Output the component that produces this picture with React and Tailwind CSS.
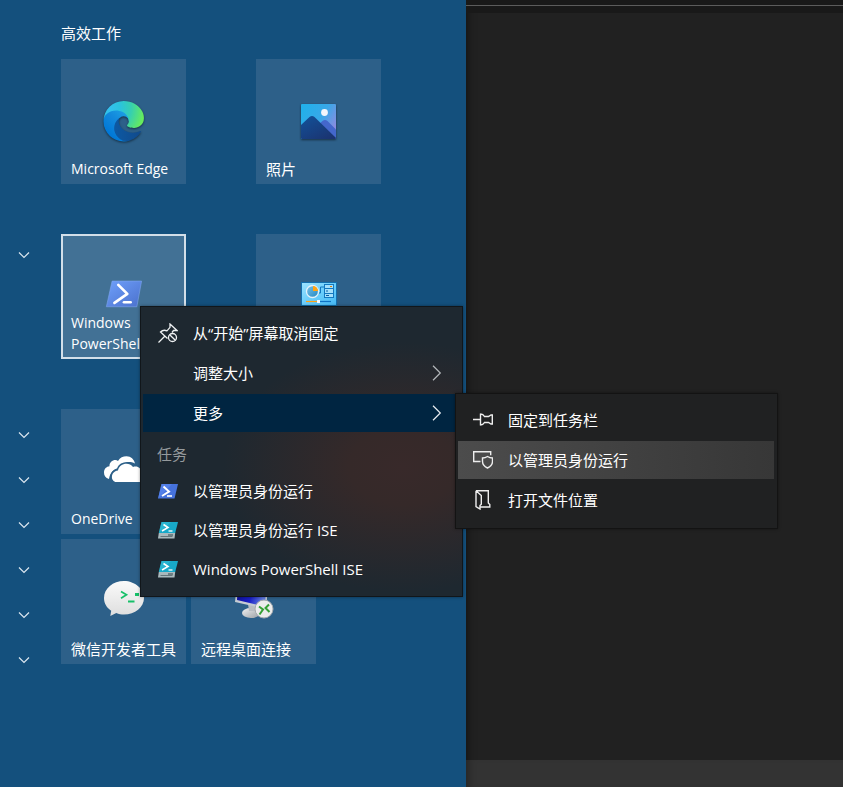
import React from "react";

function EdgeIcon() {
  return (
    <svg width="47" height="46" viewBox="0 0 47 46" aria-hidden="true" className="drop-shadow-[0_1px_1px_rgba(0,0,0,0.5)]">
      <defs>
        <linearGradient id="edgeDark" x1="63" y1="177" x2="241" y2="177" gradientUnits="userSpaceOnUse">
          <stop offset="0" stopColor="#0c59a4" />
          <stop offset="1" stopColor="#114a8b" />
        </linearGradient>
        <linearGradient id="edgeBlue" x1="157" y1="100" x2="46" y2="221" gradientUnits="userSpaceOnUse">
          <stop offset="0" stopColor="#1b9de2" />
          <stop offset="0.4" stopColor="#1389dc" />
          <stop offset="1" stopColor="#0078d7" />
        </linearGradient>
        <radialGradient id="edgeGreen" cx="26" cy="46" r="230" gradientUnits="userSpaceOnUse">
          <stop offset="0" stopColor="#35c1f1" />
          <stop offset="0.35" stopColor="#2bc3dd" />
          <stop offset="0.65" stopColor="#36cfb0" />
          <stop offset="1" stopColor="#66eb5e" />
        </radialGradient>
      </defs>
      <g transform="translate(3.5 4) scale(0.158)">
        <path fill="url(#edgeDark)" d="M231 190.5c-3.4 1.8-6.9 3.4-10.5 4.7a101.7 101.7 0 01-35.9 6.4c-47.3 0-88.5-32.5-88.5-74.3a31.5 31.5 0 0116.4-27.3c-42.8 1.8-53.8 46.4-53.8 72.5 0 74 68.1 81.4 82.8 81.4 7.9 0 19.8-2.3 27-4.6l1.3-.4a128.3 128.3 0 0066.6-52.8 4 4 0 00-5.4-5.6z" />
        <path fill="url(#edgeBlue)" d="M105.7 241.4a79.2 79.2 0 01-22.7-21.3 80.7 80.7 0 0129.5-120c3.2-1.5 8.5-4.1 15.6-4a32.4 32.4 0 0125.7 13 31.9 31.9 0 016.3 18.7c0-.2 24.5-79.6-80-79.6-43.9 0-80 41.6-80 78.2a130.2 130.2 0 0012.1 56 128 128 0 00156.4 67 75.5 75.5 0 01-62.8-8z" />
        <path fill="url(#edgeGreen)" d="M152.3 148.9c-.9 1-3.4 2.5-3.4 5.6 0 2.6 1.7 5.2 4.8 7.3 14.3 10 41.4 8.6 41.5 8.6a59.6 59.6 0 0030.3-8.3 61.4 61.4 0 0030.4-52.9c.3-22.4-8-37.3-11.3-43.9C223.5 23.9 177.7 0 128 0a128 128 0 00-128 126.2c.5-36.5 36.8-66 80-66 3.5 0 23.5.3 42 10.1 16.3 8.6 24.9 19 30.8 29.2 6.2 10.7 7.3 24.1 7.3 29.5 0 5.3-2.7 13.3-7.8 19.9z" />
      </g>
    </svg>
  );
}

function PhotosIcon() {
  return (
    <svg width="47" height="46" viewBox="0 0 47 46" aria-hidden="true" className="drop-shadow-[0_1px_1px_rgba(0,0,0,0.5)]">
      <defs>
        <linearGradient id="sky" x1="0" y1="0.2" x2="1" y2="0.8">
          <stop offset="0" stopColor="#22b0ea" />
          <stop offset="0.5" stopColor="#38a8e8" />
          <stop offset="1" stopColor="#9a86e0" />
        </linearGradient>
        <linearGradient id="hill" x1="0" y1="0" x2="0.8" y2="1">
          <stop offset="0" stopColor="#12529a" />
          <stop offset="1" stopColor="#1b3370" />
        </linearGradient>
        <clipPath id="photoFrame">
          <rect x="6" y="7" width="35" height="35" rx="1" />
        </clipPath>
      </defs>
      <g clipPath="url(#photoFrame)">
        <rect x="6" y="7" width="35" height="35" fill="url(#sky)" />
        <circle cx="29.5" cy="15.5" r="3.4" fill="#f4f6fb" />
        <path d="M23 28l4.500-4q2.500-2 5 0L42 33.500V42H32z" fill="#4467cc" />
        <path d="M5 29L14.500 20q2.500-2 5 0L41 41v2H5z" fill="url(#hill)" />
      </g>
    </svg>
  );
}

function PowerShellTileIcon() {
  return (
    <svg width="47" height="42" viewBox="0 -1 47 42" aria-hidden="true">
      <defs>
        <linearGradient id="psTile" x1="0" y1="0" x2="1" y2="1">
          <stop offset="0" stopColor="#6fa0fb" />
          <stop offset="1" stopColor="#4a70cc" />
        </linearGradient>
      </defs>
      <path d="M11.500 8.500H42.500L37.500 35.500H5.500z" fill="url(#psTile)" stroke="#7fa5ee" strokeWidth="0.6" strokeLinejoin="round" />
      <path d="M18 12.500l9.500 9.500L14 31.500" fill="none" stroke="#fff" strokeWidth="2.8" strokeLinecap="round" strokeLinejoin="round" />
      <path d="M24 30.800h7" stroke="#fff" strokeWidth="2.8" strokeLinecap="round" />
    </svg>
  );
}

function ControlPanelIcon() {
  return (
    <svg width="47" height="42" viewBox="0 0 47 42" aria-hidden="true">
      <defs>
        <linearGradient id="cpBg" x1="0" y1="0" x2="1" y2="1">
          <stop offset="0" stopColor="#9be2ff" />
          <stop offset="0.45" stopColor="#6fd0fc" />
          <stop offset="1" stopColor="#45b9f5" />
        </linearGradient>
        <linearGradient id="cpPie" x1="0" y1="0" x2="1" y2="1">
          <stop offset="0" stopColor="#7cc4e8" />
          <stop offset="1" stopColor="#1f86c4" />
        </linearGradient>
      </defs>
      <rect x="6" y="10" width="36" height="24" fill="#136fae" />
      <rect x="7" y="11" width="34" height="22" fill="url(#cpBg)" />
      <circle cx="17.500" cy="19.500" r="6" fill="url(#cpPie)" stroke="#e4f2fa" strokeWidth="1.300" />
      <path d="M18 19V14a5 5 0 015 5z" fill="#ffa414" />
      <path d="M24 21h1.500v-6H29" fill="none" stroke="#1378c0" strokeWidth="1" />
      <rect x="29" y="12" width="10" height="14" fill="#1378c0" />
      <path d="M30 13h8v3h-8zM30 17h8v4h-8zM30 22h8v3h-8z" fill="#a4e0fc" />
      <path d="M35 14.500h2" stroke="#e0800c" strokeWidth="1" />
      <path d="M31 19h2M31 23.500h3" stroke="#0c5ea4" strokeWidth="1" />
      <path d="M11 29.500h11" stroke="#ffa414" strokeWidth="1.200" />
      <path d="M25 29.500h11" stroke="#0e72c4" strokeWidth="1.200" />
      <rect x="22" y="28" width="3" height="3" fill="#f4fbff" />
    </svg>
  );
}

function OneDriveIcon() {
  return (
    <svg width="47" height="42" viewBox="0 0 47 42" aria-hidden="true">
      <path d="M9 32C5.500 31 4 28.500 4 25.500c0-3.500 2.500-6 5.500-6.200C9 14.500 15 11.500 18 14c2-3.500 5-4.800 8.500-4.800 4.500.2 7.500 3 8.500 7.300-7-3.500-14-.5-16.500 4.500-5 1-8.500 4.500-9.500 11z" fill="#fff" />
      <path d="M16.500 35C10.500 35 10 24.500 18 23.500c1-6.500 10.500-9.500 15-3.500 5-1.500 8 1.500 8 4.500 5.500 1.500 5 10.500-1 10.500z" fill="#fff" stroke="#2e6189" strokeWidth="3" paintOrder="stroke" />
    </svg>
  );
}

function WeChatDevIcon() {
  return (
    <svg width="47" height="42" viewBox="0 0 47 42" aria-hidden="true">
      <defs>
        <linearGradient id="bubble" x1="0" y1="0" x2="0" y2="1">
          <stop offset="0" stopColor="#fafafa" />
          <stop offset="1" stopColor="#dedede" />
        </linearGradient>
      </defs>
      <path d="M24 4C13 4 4 11.500 4 21c0 5.500 2.800 9.800 7.200 12.800L10.300 39l6-3c2.500 1 5 1.500 7.700 1.500 11 0 20-7.500 20-16.500S35 4 24 4z" fill="url(#bubble)" />
      <path d="M21 14.500l5.500 3.300-5.500 3.500" fill="none" stroke="#17c069" strokeWidth="1.700" />
      <path d="M28 24.500h6.500" stroke="#17c069" strokeWidth="2" />
      <rect x="35" y="16" width="4" height="3" fill="#17c069" />
    </svg>
  );
}

function RemoteDesktopIcon() {
  return (
    <svg width="47" height="44" viewBox="0 0 47 44" aria-hidden="true">
      <defs>
        <linearGradient id="screenBlue" x1="0" y1="0" x2="1" y2="0.3">
          <stop offset="0" stopColor="#0b0c8c" />
          <stop offset="0.6" stopColor="#1a1fc6" />
          <stop offset="1" stopColor="#5d78dc" />
        </linearGradient>
        <linearGradient id="stand" x1="0" y1="0" x2="1" y2="1">
          <stop offset="0" stopColor="#f2f2f2" />
          <stop offset="1" stopColor="#9a9ea3" />
        </linearGradient>
      </defs>
      <ellipse cx="21" cy="36" rx="9" ry="5" fill="url(#stand)" />
      <path d="M18 27l9 2-1 5h-7z" fill="#b9bdc2" />
      <path d="M7 4l31 6-2 22L5 25z" fill="#c5cbd3" />
      <path d="M8 6l28 5-1 18.500L7 23z" fill="url(#screenBlue)" />
      <circle cx="34" cy="32" r="9" fill="#ececec" stroke="#a5a9ad" strokeWidth="1" />
      <path d="M29 29.500l4 3-3.500 5M39 27.500l-3.500 3.500 4 4" fill="none" stroke="#35a035" strokeWidth="2" />
    </svg>
  );
}

function ChevronDown() {
  return (
    <svg width="12" height="8" viewBox="0 0 12 8" aria-hidden="true">
      <path d="M1 1.500l5 5 5-5" fill="none" stroke="#dce7f0" strokeWidth="1.200" />
    </svg>
  );
}

function ChevronRight() {
  return (
    <svg width="10" height="16" viewBox="0 0 10 16" aria-hidden="true">
      <path d="M1 .8L8.300 8 1 15.200" fill="none" stroke="currentColor" strokeWidth="1.200" />
    </svg>
  );
}

function UnpinIcon() {
  return (
    <svg width="20" height="20" viewBox="0 0 20 20" fill="none" stroke="#f0f2f3" strokeWidth="1.300" aria-hidden="true">
      <path d="M.5 19.500L6.500 13.500M9.500 15.500L2.500 9c2-2 4.500-2 6.500-1.200L12 4.300V1l7 6.500h-3.500L14 9.500" />
      <circle cx="14.500" cy="14.500" r="4" />
      <path d="M11.700 11.700l5.600 5.600" />
    </svg>
  );
}

function PowerShellSmallIcon() {
  return (
    <svg width="20" height="20" viewBox="0 0 20 20" aria-hidden="true">
      <path d="M3.500 3H20l-3.500 14.500H0z" fill="#4672dc" />
      <path d="M3.500 3H14L0 17.500z" fill="#5b8af2" opacity="0.600" />
      <path d="M5.500 5.500l5.500 5-7 4.500" fill="none" stroke="#fff" strokeWidth="2" />
      <path d="M9 15h5" stroke="#fff" strokeWidth="1.600" />
    </svg>
  );
}

function IseIcon() {
  return (
    <svg width="20" height="20" viewBox="0 0 20 20" aria-hidden="true">
      <path d="M3.500 2H20l-2.800 11H.8z" fill="#18a9c9" />
      <path d="M3.500 2H13L.8 13z" fill="#3cc4dc" opacity="0.500" />
      <path d="M.8 13h16.400l-.7 5.500H0z" fill="#aab9bd" />
      <path d="M2.500 16.500h12" stroke="#65757a" strokeWidth="1" />
      <path d="M10 15h5" stroke="#33464c" strokeWidth="1" />
      <path d="M5.500 4.500L10 7.500l-6 3.500" fill="none" stroke="#fff" strokeWidth="1.600" />
      <path d="M10.500 11h4" stroke="#fff" strokeWidth="1.300" />
    </svg>
  );
}

function PinIcon() {
  return (
    <svg width="20" height="20" viewBox="0 0 20 20" fill="none" stroke="#eee" strokeWidth="1.400" aria-hidden="true">
      <path d="M0 9.500h7.500M7.500 3.500v12M7.500 15c1.800 0 3-.7 4-2.500h4l2.500 1.500h1.300V5H18l-2.500 1.500h-4c-1-1.800-2.200-2.500-4-2.500" />
    </svg>
  );
}

function ShieldRunIcon() {
  return (
    <svg width="20" height="20" viewBox="0 0 20 20" fill="none" stroke="#eee" strokeWidth="1.400" aria-hidden="true">
      <path d="M7.500 11.500H.7V1.700h17v3.500" />
      <path d="M14.500 6.500c1.500 1 3 1.500 5 1.500v3.500c0 3-2 5-5 6.500-3-1.500-5-3.500-5-6.500V8c2 0 3.500-.5 5-1.500z" />
    </svg>
  );
}

function OpenLocationIcon() {
  return (
    <svg width="20" height="20" viewBox="0 0 20 20" fill="none" stroke="#eee" strokeWidth="1.400" aria-hidden="true">
      <path d="M3 .7h12.300V13l1.500 1.500V17H7.500M3 .7v16L7 19v-3.500l1.300-1.300V5.500L3 .7" />
    </svg>
  );
}

function Tile({ icon, label, children, selected }) {
  return (
    <button
      type="button"
      aria-label={label}
      className={
        selected
          ? "flex size-[125px] flex-col items-center bg-[#427195] pt-[38px] pb-[5px] outline-2 -outline-offset-2 outline-[#d3dfe9]"
          : "flex size-[125px] flex-col items-center bg-[#2d6089] pt-[38px] pb-[5px]"
      }
    >
      {icon}
      {children && <span className="mt-auto w-full pl-[10px] text-left leading-5">{children}</span>}
    </button>
  );
}

function MenuItem({ icon, children, arrow, active, task }) {
  return (
    <button
      type="button"
      role="menuitem"
      className={
        "flex w-full items-center gap-[15px] pr-[18px] pl-[15px] text-left leading-5 " +
        (task ? "h-[39px] " : "h-[38px] ") +
        (active ? active : "")
      }
    >
      <span className="flex size-5 shrink-0 items-center justify-center">{icon}</span>
      <span className="grow">{children}</span>
      {arrow && <span className={active ? "text-[#e8eef2]" : "text-[#b4b8bb]"}><ChevronRight /></span>}
    </button>
  );
}

function Latin({ children }) {
  return <span className="text-sm leading-5">{children}</span>;
}

export default function App() {
  return (
    <div className="relative flex min-h-screen overflow-hidden bg-[#212121] font-['Open_Sans','Noto_Sans_CJK_SC',sans-serif] text-[15px] text-white">
      <main className="flex w-[466px] shrink-0 bg-[#14507d]">
        <nav aria-label="分组" className="flex w-[61px] shrink-0 flex-col pt-[232px]">
          <button type="button" aria-label="展开" className="mb-[135px] flex h-[45px] w-12 items-center justify-center">
            <ChevronDown />
          </button>
          {[1, 2, 3, 4, 5, 6].map((n) => (
            <button key={n} type="button" aria-label="展开" className="flex h-[45px] w-12 items-center justify-center">
              <ChevronDown />
            </button>
          ))}
        </nav>

        <section className="flex flex-col">
          <h2 className="h-[59px] pt-[23px] leading-5">高效工作</h2>
          <div className="flex flex-col gap-[50px]">
            <div className="flex gap-[70px]">
              <Tile icon={<EdgeIcon />}><Latin>Microsoft Edge</Latin></Tile>
              <Tile icon={<PhotosIcon />}>照片</Tile>
            </div>
            <div className="flex gap-[70px]">
              <Tile icon={<PowerShellTileIcon />} selected>
                <Latin>Windows<br />PowerShell</Latin>
              </Tile>
              <Tile icon={<ControlPanelIcon />} label="控制面板" />
            </div>
            <div className="flex flex-col gap-[5px]">
              <Tile icon={<OneDriveIcon />}><Latin>OneDrive</Latin></Tile>
              <div className="flex gap-[5px]">
                <Tile icon={<WeChatDevIcon />}>微信开发者工具</Tile>
                <Tile icon={<RemoteDesktopIcon />}>远程桌面连接</Tile>
              </div>
            </div>
          </div>
        </section>
      </main>

      <aside className="flex grow flex-col shadow-[inset_8px_0_8px_-6px_rgba(0,0,0,0.4)]">
        <div className="h-[5px] bg-[#191919]" />
        <div className="h-[8px] border-t border-[#5c5c5c] bg-[#191919]" />
        <div className="grow" />
        <div className="h-[27px] bg-[#333333] shadow-[inset_8px_0_8px_-6px_rgba(0,0,0,0.3)]" />
      </aside>

      <div
        role="menu"
        className="absolute top-[306px] left-[140px] w-[323px] border border-[#11161a] bg-[#1e2830] bg-[radial-gradient(ellipse_180px_125px_at_262px_160px,#38292a_0%,#352929_30%,#1e2830_100%)] px-[2px] pt-[7px] pb-[8px] shadow-[0_0_3px_rgba(0,0,0,0.4)]"
      >
        <div className="flex flex-col gap-[2px]">
          <MenuItem icon={<UnpinIcon />}>从“开始”屏幕取消固定</MenuItem>
          <MenuItem arrow>调整大小</MenuItem>
          <MenuItem arrow active="bg-[#002541]">更多</MenuItem>
          <div className="flex h-[37px] items-center pt-[2px] pl-[14px] leading-5 text-[#959a9d]">任务</div>
        </div>
        <MenuItem task icon={<PowerShellSmallIcon />}>以管理员身份运行</MenuItem>
        <MenuItem task icon={<IseIcon />}>以管理员身份运行 ISE</MenuItem>
        <MenuItem task icon={<IseIcon />}>Windows PowerShell ISE</MenuItem>
      </div>

      <div
        role="menu"
        className="absolute top-[393px] left-[455px] flex w-[323px] flex-col gap-[2px] border border-[#131313] bg-[#202122] pt-[7px] pr-[3px] pb-[9px] pl-[2px] shadow-[0_0_3px_rgba(0,0,0,0.4)]"
      >
        <MenuItem icon={<PinIcon />}>固定到任务栏</MenuItem>
        <MenuItem icon={<ShieldRunIcon />} active="bg-linear-to-r from-[#4c4c4c] to-[#373737]">以管理员身份运行</MenuItem>
        <MenuItem icon={<OpenLocationIcon />}>打开文件位置</MenuItem>
      </div>
    </div>
  );
}
